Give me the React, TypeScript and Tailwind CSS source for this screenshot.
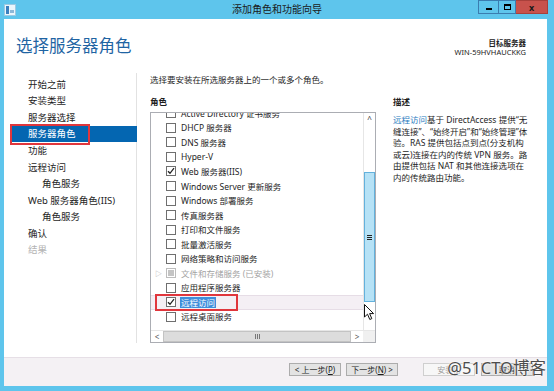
import React from "react";

const navItems = [
  { label: "开始之前" },
  { label: "安装类型" },
  { label: "服务器选择" },
  { label: "服务器角色", selected: true },
  { label: "功能" },
  { label: "远程访问" },
  { label: "角色服务", indent: true },
  { label: "Web 服务器角色(IIS)" },
  { label: "角色服务", indent: true },
  { label: "确认" },
  { label: "结果", disabled: true },
];

type Role = {
  label: string;
  checked?: boolean;
  installed?: boolean;
  current?: boolean;
};

const roles: Role[] = [
  { label: "Active Directory 证书服务" },
  { label: "DHCP 服务器" },
  { label: "DNS 服务器" },
  { label: "Hyper-V" },
  { label: "Web 服务器(IIS)", checked: true },
  { label: "Windows Server 更新服务" },
  { label: "Windows 部署服务" },
  { label: "传真服务器" },
  { label: "打印和文件服务" },
  { label: "批量激活服务" },
  { label: "网络策略和访问服务" },
  { label: "文件和存储服务 (已安装)", installed: true },
  { label: "应用程序服务器" },
  { label: "远程访问", checked: true, current: true },
  { label: "远程桌面服务" },
];

function Check() {
  return (
    <svg width="8" height="8" viewBox="0 0 8 8" className="block">
      <path d="M1 4.2 L3 6.3 L7 1.2" fill="none" stroke="#222" strokeWidth="1.3" />
    </svg>
  );
}

function Checkbox({ checked, installed }: { checked?: boolean; installed?: boolean }) {
  return (
    <div
      className={`w-[10px] h-[10px] border flex items-center justify-center bg-white ${
        installed ? "border-[#bdbdbd]" : "border-[#6f6f6f]"
      }`}
    >
      {checked && <Check />}
      {installed && <div className="w-[6px] h-[6px] bg-[#c4c4c4]" />}
    </div>
  );
}

function TitleBar() {
  return (
    <div className="h-[19px] grid grid-cols-[1fr_auto_1fr] items-start">
      <div className="pl-[4px] pt-[4px]">
        <svg width="12" height="12" viewBox="0 0 12 12">
          <rect x="0.5" y="0.5" width="11" height="11" fill="#eaf6fc" stroke="#9dc9e2" />
          <rect x="2" y="2" width="3" height="8" fill="#3a7fbf" />
          <rect x="6" y="6" width="4" height="3" fill="#8cb8d8" />
        </svg>
      </div>
      <div className="text-[10px] leading-[19px] text-[#1a1a1a]">添加角色和功能向导</div>
      <div className="flex justify-end pr-[6px]">
        <div className="w-[20px] h-[14px] border border-[#3a7db0] border-r-0 flex items-center justify-center">
          <div className="w-[6px] h-[2px] bg-black mt-[3px]" />
        </div>
        <div className="w-[18px] h-[14px] border border-[#3a7db0] flex items-center justify-center">
          <div className="w-[7px] h-[6px] border-[1.5px] border-black border-t-[2px]" />
        </div>
        <div className="w-[32px] h-[14px] bg-[#c8524c] border border-[#a8403b] border-l-0 flex items-center justify-center text-[9px] font-bold leading-none text-[#1a1a1a]">
          x
        </div>
      </div>
    </div>
  );
}

function VScroll() {
  return (
    <div className="w-[12px] flex flex-col border-l border-[#e6e6e6]">
      <div className="h-[12px] flex items-center justify-center text-[8px] leading-none text-[#333]">^</div>
      <div className="h-[47px]" />
      <div className="h-[130px] bg-[#b6e2f6] border border-[#63b1dc] flex items-center justify-center">
        <div className="flex flex-col gap-[1px]">
          <div className="w-[5px] h-[1px] bg-[#222]" />
          <div className="w-[5px] h-[1px] bg-[#222]" />
          <div className="w-[5px] h-[1px] bg-[#222]" />
        </div>
      </div>
      <div className="flex-1" />
    </div>
  );
}

function HScroll() {
  return (
    <div className="h-[12px] flex border-t border-[#e6e6e6]">
      <div className="w-[12px] flex items-center justify-center text-[8px] leading-none text-[#555]">&lt;</div>
      <div className="flex-1 bg-[#dcdcdc] border border-[#c3c3c3] flex items-center justify-center">
        <div className="flex gap-[1px]">
          <div className="w-[1px] h-[5px] bg-[#777]" />
          <div className="w-[1px] h-[5px] bg-[#777]" />
          <div className="w-[1px] h-[5px] bg-[#777]" />
        </div>
      </div>
      <div className="w-[12px] flex items-center justify-center text-[8px] leading-none text-[#555]">&gt;</div>
      <div className="w-[12px] bg-[#f0f0f0]" />
    </div>
  );
}

function RoleList() {
  return (
    <div className="relative w-[226px] h-[231px] border border-[#abadb3] flex flex-col">
      <div className="flex-1 flex min-h-0">
        <div className="flex-1 overflow-hidden">
          <div className="-mt-[7px]">
            {roles.map((r) => (
              <div
                key={r.label}
                className={`h-[14.55px] flex items-center ${
                  r.current ? "bg-[#f4eff4] border-y border-[#e6dde6]" : ""
                }`}
              >
                <div className="w-[15px] flex justify-center text-[7px] leading-none text-[#b0b0b0]">
                  {r.installed ? "▷" : ""}
                </div>
                <Checkbox checked={r.checked} installed={r.installed} />
                <span
                  className={`ml-[4px] text-[8.5px] leading-[11px] whitespace-nowrap px-[1px] ${
                    r.installed ? "text-[#a3a3a3]" : r.current ? "bg-[#3f8edb] text-white" : "text-[#1e1e1e]"
                  }`}
                >
                  {r.label}
                </span>
              </div>
            ))}
          </div>
        </div>
        <VScroll />
      </div>
      <HScroll />
      {/* red annotation */}
      <div className="absolute left-[4px] top-[181px] w-[83px] h-[17px] border-2 border-[#e0363c]" />
      {/* mouse cursor */}
      <svg className="absolute left-[213px] top-[191px]" width="11" height="17" viewBox="0 0 11 17">
        <path d="M0.5 0.5 L0.5 13 L3.5 10.2 L5.8 15.5 L7.8 14.6 L5.6 9.6 L9.6 9.6 Z" fill="#fff" stroke="#111" strokeWidth="1" />
      </svg>
    </div>
  );
}

function Button({ children, disabled }: { children: React.ReactNode; disabled?: boolean }) {
  return (
    <div
      className={`h-[13px] w-[52px] flex items-center justify-center text-[8px] leading-none border ${
        disabled ? "bg-[#f7f7f7] border-[#cfcfcf] text-[#9c9c9c]" : "bg-[#e3e3e3] border-[#acacac] text-[#1e1e1e]"
      }`}
    >
      {children}
    </div>
  );
}

export default function App() {
  return (
    <div className="w-[554px] h-[391px] bg-[#5ec5ec] flex flex-col overflow-hidden font-['Noto_Sans','Noto_Sans_CJK_SC',sans-serif] text-[#1e1e1e]">
      <TitleBar />
      <div className="flex-1 flex flex-col bg-white ml-[4px] mr-[7px] mb-[5px]">
        {/* header */}
        <div className="h-[50px] flex justify-between">
          <div className="pl-[12px] pt-[17px] text-[16.5px] leading-[20px] text-[#1f64a3]">选择服务器角色</div>
          <div className="pr-[21px] pt-[20px] text-right text-[7.5px] leading-[9px] text-[#222]">
            <div className="font-bold">目标服务器</div>
            <div>WIN-59HVHAUCKKG</div>
          </div>
        </div>

        {/* content */}
        <div className="flex-1 flex pb-[14px]">
          <nav className="w-[133px] pl-[8px] pt-[3px] border-r border-[#e2e2e2] mt-[4px]">
            {navItems.map((n, i) => (
              <div
                key={i}
                className={`relative h-[16.6px] w-[125px] flex items-center text-[9.5px] leading-none ${
                  n.selected ? "bg-[#0466b1] text-white" : n.disabled ? "text-[#b4b4b4]" : "text-[#1e1e1e]"
                } ${n.indent ? "pl-[30px]" : "pl-[16px]"}`}
              >
                {n.label}
                {n.selected && (
                  <div className="absolute -left-[2px] -top-[2px] w-[80px] h-[21px] border-2 border-[#e0363c]" />
                )}
              </div>
            ))}
          </nav>

          <div className="pl-[13px] pt-[5px]">
            <div className="text-[8.5px] leading-[12px]">选择要安装在所选服务器上的一个或多个角色。</div>
            <div className="mt-[10px] text-[8.5px] leading-[12px] font-bold">角色</div>
            <div className="mt-[4px]">
              <RoleList />
            </div>
          </div>

          <div className="pl-[17px] pt-[27px] w-[153px]">
            <div className="text-[8.5px] leading-[12px] font-bold">描述</div>
            <p className="mt-[6px] text-[8.5px] leading-[11.6px] whitespace-nowrap">
              <span className="text-[#2a7cc0]">远程访问</span>基于 DirectAccess 提供“无
              <br />
              缝连接”、“始终开启”和“始终管理”体
              <br />
              验。RAS 提供包括点到点(分支机构
              <br />
              或云)连接在内的传统 VPN 服务。路
              <br />
              由提供包括 NAT 和其他连接选项在
              <br />
              内的传统路由功能。
            </p>
          </div>
        </div>

        {/* footer */}
        <div className="relative h-[29px] bg-[#f4f1f4] border-t border-[#e6dfe6] flex items-start pt-[5px] pr-[14px] justify-end">
          <div className="flex gap-[5px]">
            <Button>
              &lt; 上一步(<span className="underline">P</span>)
            </Button>
            <Button>
              下一步(<span className="underline">N</span>) &gt;
            </Button>
          </div>
          <div className="flex gap-[6px] ml-[25px]">
            <Button disabled>安装(I)</Button>
            <Button>取消</Button>
          </div>
          {/* watermark */}
          <div className="absolute right-[1px] top-[0px] text-[16.5px] leading-[20px] text-[#4d4d4d] [text-shadow:0_0_2px_#fff,0_0_2px_#fff]">
            @51CTO博客
          </div>
        </div>
      </div>
    </div>
  );
}
